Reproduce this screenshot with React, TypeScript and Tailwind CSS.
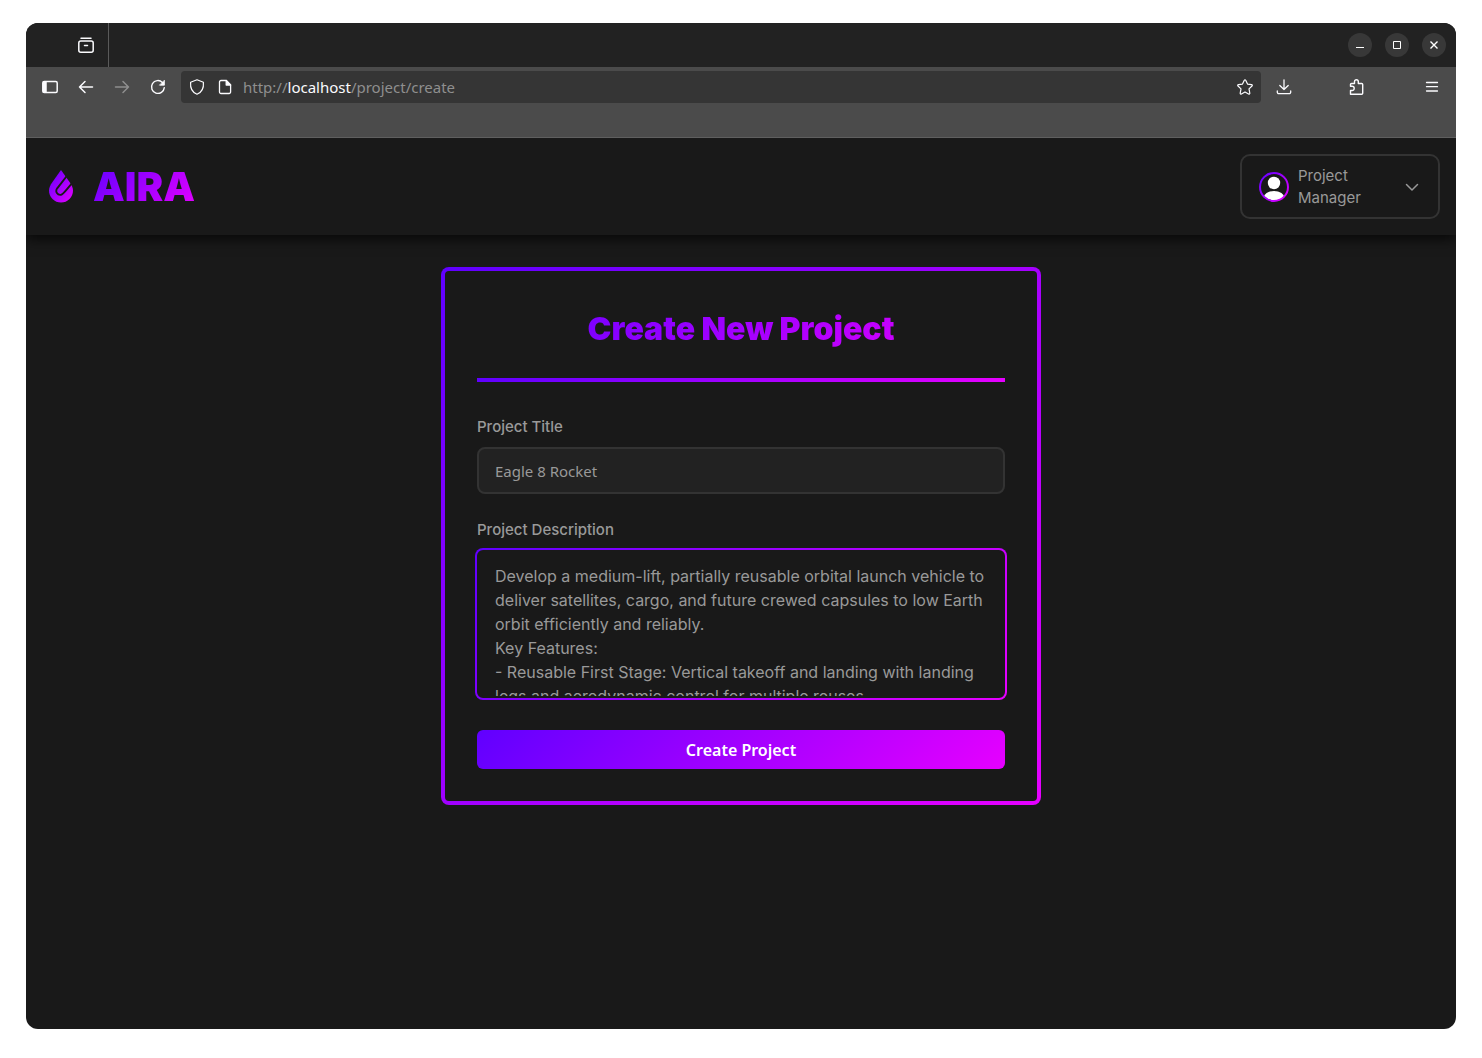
import React from "react";

const btn = "flex items-center justify-center text-[#fbfbfe]";

function Stroke({ children, size = 16, w = 1.3 }: { children: React.ReactNode; size?: number; w?: number }) {
  return (
    <svg width={size} height={size} viewBox={`0 0 ${size} ${size}`} fill="none" stroke="currentColor" strokeWidth={w} strokeLinecap="round" strokeLinejoin="round" aria-hidden="true">
      {children}
    </svg>
  );
}

function TabBar() {
  return (
    <div className="flex h-11 shrink-0 items-center justify-between bg-[#222222] pr-2.5">
      <div className="flex h-full w-[83px] items-center justify-end border-r border-[#5a5a5a] pr-3.5">
        <button aria-label="Recent tabs" className={btn}>
          <Stroke size={16} w={1.5}>
            <path d="M3 1.2h10" />
            <rect x="0.8" y="4" width="14.4" height="11.2" rx="2" />
            <path d="M6.5 8.6h3" />
          </Stroke>
        </button>
      </div>
      <div className="flex gap-[13px]">
        <button aria-label="Minimize" className="flex size-6 items-center justify-center rounded-full bg-[#383838]">
          <svg width="10" height="10" viewBox="0 0 10 10" aria-hidden="true"><path d="M1 7.5h8" stroke="white" /></svg>
        </button>
        <button aria-label="Maximize" className="flex size-6 items-center justify-center rounded-full bg-[#383838]">
          <svg width="10" height="10" viewBox="0 0 10 10" fill="none" aria-hidden="true"><path d="M1.5 1.5h7v7h-7z" stroke="white" /></svg>
        </button>
        <button aria-label="Close" className="flex size-6 items-center justify-center rounded-full bg-[#383838]">
          <svg width="10" height="10" viewBox="0 0 10 10" aria-hidden="true"><path d="M1.5 1.5l7 7M8.5 1.5l-7 7" stroke="white" strokeWidth="1.4" /></svg>
        </button>
      </div>
    </div>
  );
}

function Toolbar() {
  return (
    <div className="flex h-[71px] shrink-0 items-start border-b border-[#5f5f5f] bg-[#4b4b4b] pt-1 pr-4 pl-4 text-[#fbfbfe]">
      <div className="flex h-8 items-center gap-5">
        <button aria-label="Sidebar" className={btn}>
          <Stroke w={1.5}>
            <rect x="0.8" y="2.5" width="14.4" height="11" rx="1.5" />
            <path d="M1.5 3h2.500v10H1.500z" fill="currentColor" />
          </Stroke>
        </button>
        <button aria-label="Back" className={btn}>
          <Stroke w={1.5}><path d="M14.5 8H1.5M7 2.5L1.5 8L7 13.5" /></Stroke>
        </button>
        <button aria-label="Forward" disabled className="flex items-center justify-center text-[#8f8f8f]">
          <Stroke w={1.5}><path d="M1.5 8h13M9 2.5L14.5 8L9 13.5" /></Stroke>
        </button>
        <button aria-label="Reload" className={btn}>
          <Stroke w={1.4}>
            <path d="M14.3 8.6A6.4 6.4 0 1 1 12.4 3.4" />
            <path d="M14.4 1.6v4.6H9.8z" fill="currentColor" strokeWidth="0.8" />
          </Stroke>
        </button>
      </div>
      <div className="ml-[15px] flex h-8 min-w-0 flex-1 items-center rounded bg-[#353535] px-2">
        <button aria-label="Tracking protection" className={btn}>
          <Stroke w={1.2}>
            <path d="M8 0.8L14.4 3.2C14.9 8.6 12.4 13.4 8 15.3C3.6 13.4 1.1 8.6 1.6 3.2z" />
          </Stroke>
        </button>
        <button aria-label="Site information" className="ml-3 flex items-center justify-center">
          <Stroke w={1.3}>
            <path d="M4 1.5h5.2L13.6 6v7a1.5 1.5 0 0 1-1.5 1.5H4A1.5 1.5 0 0 1 2.5 13V3A1.5 1.5 0 0 1 4 1.5z" />
            <path d="M9.2 1.5V6h4.4z" fill="currentColor" />
          </Stroke>
        </button>
        <a href="#create" className="ml-2.5 min-w-0 flex-1 truncate font-['Noto_Sans',sans-serif] text-[15px] leading-5 text-[#8f8f8f]">
          http://<span className="text-[#fbfbfe]">localhost</span>/project/create
        </a>
        <button aria-label="Bookmark" className={btn}>
          <Stroke w={1.2}>
            <path d="M7.300 1.200a.8.8 0 0 1 1.400 0l1.800 3.900 4.100.5a.8.8 0 0 1 .4 1.400l-3 2.900.8 4.200a.8.8 0 0 1-1.200.8L8 12.900l-3.600 2a.8.8 0 0 1-1.200-.8l.8-4.200-3-2.900a.8.8 0 0 1 .4-1.400l4.100-.5z" />
          </Stroke>
        </button>
      </div>
      <div className="flex h-8 items-center pl-[15px]">
        <button aria-label="Downloads" className={btn}>
          <Stroke w={1.3}>
            <path d="M8 0.8v9.700M3.8 6.5L8 10.5l4.2-4M1.3 12v1.2a1.5 1.5 0 0 0 1.5 1.5h10.4a1.5 1.5 0 0 0 1.5-1.5V12" />
          </Stroke>
        </button>
        <button aria-label="Extensions" className="ml-14 flex items-center justify-center">
          <Stroke w={1.4}>
            <path d="M2.500 15.200V11.500h1.600a2.100 2.100 0 0 0 0-4.200H2.500V5.500a1 1 0 0 1 1-1H6.500V2.600a1.900 1.900 0 0 1 3.800 0v1.900H13.700a1 1 0 0 1 1 1v8.700a1 1 0 0 1-1 1z" />
          </Stroke>
        </button>
        <button aria-label="Menu" className="ml-[60px] flex items-center justify-center">
          <Stroke w={1.3}><path d="M2.5 3.5h11M2.5 7.7h11M2.5 12h11" /></Stroke>
        </button>
      </div>
    </div>
  );
}

function Logo() {
  return (
    <svg width="24" height="33" viewBox="0 0 24 33" aria-hidden="true">
      <defs>
        <linearGradient id="drop" x1="0" y1="0" x2="1" y2="1">
          <stop offset="0" stopColor="#6000ff" />
          <stop offset="1" stopColor="#e600ff" />
        </linearGradient>
      </defs>
      <path d="M12 0L3.500 12C1.200 15.300 0 17.800 0 20.500A12 12 0 0 0 24 20.500C24 17.800 22.800 15.300 20.500 12z" fill="url(#drop)" />
      <path d="M17.800 6L8.200 18.300C5.800 21.800 8.500 25.300 12 24.800C14.200 24.300 15 22.500 23.500 12.500" fill="none" stroke="#191919" strokeWidth="1.900" />
    </svg>
  );
}

function Header() {
  return (
    <header className="relative flex shrink-0 items-center justify-between bg-[#191919] py-4 pr-4 pl-[23px] shadow-[0_4px_12px_rgba(0,0,0,0.7)]">
      <a href="#home" className="flex items-center gap-5">
        <Logo />
        <span className="bg-[linear-gradient(135deg,#6000ff,#e600ff)] bg-clip-text text-[40px] leading-[49px] font-black text-transparent">AIRA</span>
      </a>
      <button className="flex h-[65px] w-[200px] items-center rounded-[10px] border-2 border-[#333333] px-[17px] text-left text-[15px] leading-[22px] text-[#999999]">
        <svg width="30" height="30" viewBox="0 0 30 30" className="shrink-0" aria-hidden="true">
          <defs>
            <clipPath id="face"><circle cx="15" cy="15" r="13.5" /></clipPath>
          </defs>
          <g clipPath="url(#face)" fill="white">
            <circle cx="15" cy="11" r="6.200" />
            <ellipse cx="15" cy="26" rx="10.500" ry="7" />
          </g>
          <circle cx="15" cy="15" r="14" fill="none" stroke="url(#drop)" strokeWidth="2" />
        </svg>
        <span className="ml-[9px] w-20 flex-1">Project<br />Manager</span>
        <svg width="14" height="14" viewBox="0 0 14 14" className="mr-0.5" fill="none" stroke="currentColor" strokeWidth="1.5" strokeLinecap="round" strokeLinejoin="round" aria-hidden="true">
          <path d="M1.500 4.500L7 10l5.500-5.500" />
        </svg>
      </button>
    </header>
  );
}

const description = `Develop a medium-lift, partially reusable orbital launch vehicle to deliver satellites, cargo, and future crewed capsules to low Earth orbit efficiently and reliably.
Key Features:
- Reusable First Stage: Vertical takeoff and landing with landing legs and aerodynamic control for multiple reuses.`;

function ProjectForm() {
  return (
    <div className="mx-auto mt-8 w-full max-w-[600px] rounded-lg bg-[linear-gradient(135deg,#6000ff,#e600ff)] p-1">
      <form className="flex flex-col rounded bg-[#191919] p-8" onSubmit={(e) => e.preventDefault()}>
        <h1 className="bg-[linear-gradient(135deg,#6000ff,#e600ff)] bg-clip-text text-center text-[32px] leading-[51px] font-black text-transparent">Create New Project</h1>
        <div className="mt-6 h-1 bg-[linear-gradient(90deg,#6000ff,#e600ff)]" />
        <label htmlFor="title" className="mt-[33px] text-[15px] leading-6 font-medium text-[#999999]">Project Title</label>
        <input id="title" defaultValue="Eagle 8 Rocket" className="mt-2 h-[47px] rounded-lg border-2 border-[#333333] bg-[#222222] px-4 font-['Noto_Sans',sans-serif] text-[15px] text-[#999999] outline-none" />
        <label htmlFor="description" className="mt-6 text-[15px] leading-6 font-medium text-[#999999]">Project Description</label>
        <div className="-mx-0.5 mt-1.5 rounded-lg bg-[linear-gradient(135deg,#6000ff,#e600ff)] p-0.5">
          <textarea id="description" defaultValue={description} className="block h-[148px] w-full resize-none overflow-hidden rounded-md border-2 border-[#191919] bg-[#191919] px-4 py-3 text-base leading-6 text-[#999999] outline-none" />
        </div>
        <button type="submit" className="mt-[30px] h-[39px] rounded-md bg-[linear-gradient(135deg,#6000ff,#e600ff)] font-['Noto_Sans',sans-serif] text-base font-semibold text-white">Create Project</button>
      </form>
    </div>
  );
}

export default function App() {
  return (
    <div className="min-h-screen bg-white px-[26px] pt-[23px] pb-[29px] font-['Inter',sans-serif]">
      <div className="flex min-h-[calc(100vh-52px)] flex-col overflow-hidden rounded-xl bg-[#191919]">
        <TabBar />
        <div className="relative z-10 flex shrink-0 flex-col">
          <Toolbar />
        </div>
        <Header />
        <main className="flex-1 pb-8">
          <ProjectForm />
        </main>
      </div>
    </div>
  );
}
